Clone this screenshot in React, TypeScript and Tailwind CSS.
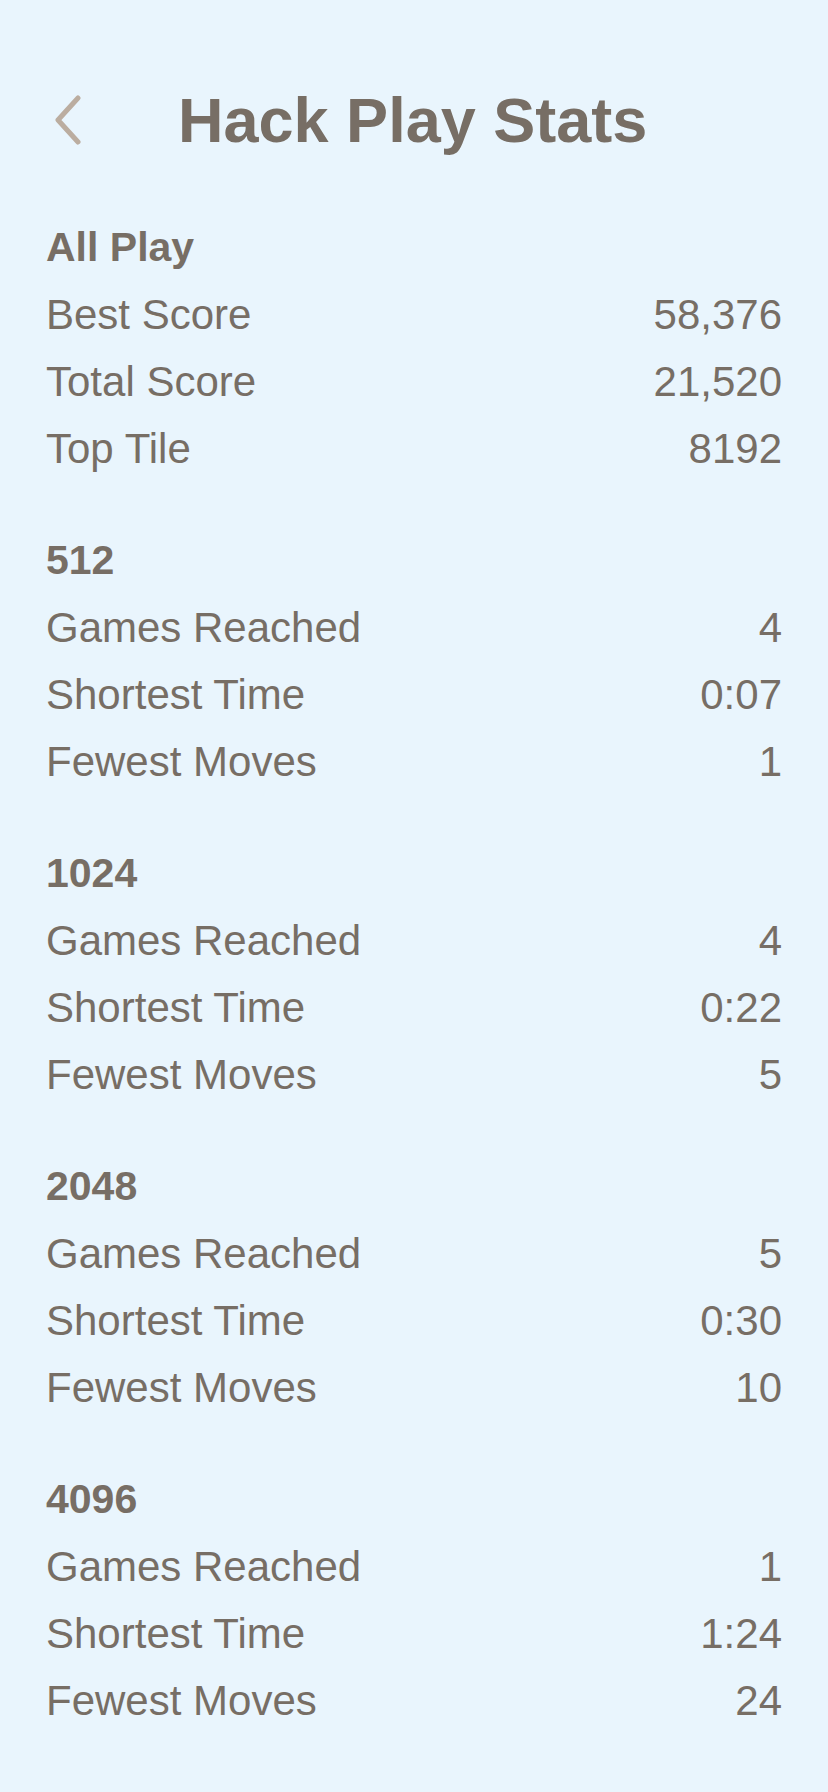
import React from 'react';

interface StatRow {
  label: string;
  value: string;
}

interface StatSection {
  title: string;
  rows: StatRow[];
}

const sections: StatSection[] = [
  {
    title: 'All Play',
    rows: [
      { label: 'Best Score', value: '58,376' },
      { label: 'Total Score', value: '21,520' },
      { label: 'Top Tile', value: '8192' },
    ],
  },
  {
    title: '512',
    rows: [
      { label: 'Games Reached', value: '4' },
      { label: 'Shortest Time', value: '0:07' },
      { label: 'Fewest Moves', value: '1' },
    ],
  },
  {
    title: '1024',
    rows: [
      { label: 'Games Reached', value: '4' },
      { label: 'Shortest Time', value: '0:22' },
      { label: 'Fewest Moves', value: '5' },
    ],
  },
  {
    title: '2048',
    rows: [
      { label: 'Games Reached', value: '5' },
      { label: 'Shortest Time', value: '0:30' },
      { label: 'Fewest Moves', value: '10' },
    ],
  },
  {
    title: '4096',
    rows: [
      { label: 'Games Reached', value: '1' },
      { label: 'Shortest Time', value: '1:24' },
      { label: 'Fewest Moves', value: '24' },
    ],
  },
];

function BackChevron() {
  return (
    <svg width="30" height="50" viewBox="0 0 30 50" fill="none">
      <path
        d="M25 3 L5 25 L25 47"
        stroke="#bbada0"
        strokeWidth="5"
        strokeLinecap="round"
        strokeLinejoin="round"
      />
    </svg>
  );
}

export default function App() {
  return (
    <div
      className="min-h-[1792px] w-[828px] bg-[#e9f5fd] pt-[80px] text-[#776e65]"
      style={{ fontFamily: '"Liberation Sans", Arial, sans-serif' }}
    >
      {/* Header */}
      <div className="flex h-[80px] items-center pl-[53px]">
        <BackChevron />
        <h1 className="ml-[95px] text-[63px] font-bold leading-[80px]">Hack Play Stats</h1>
      </div>

      {/* Stat sections */}
      <div className="flex flex-col gap-[45px] px-[46px] pt-[54px]">
        {sections.map((section) => (
          <div key={section.title}>
            <h2 className="text-[41px] font-bold leading-[67px]">{section.title}</h2>
            {section.rows.map((row) => (
              <div key={row.label} className="flex justify-between text-[42px] leading-[67px]">
                <span>{row.label}</span>
                <span>{row.value}</span>
              </div>
            ))}
          </div>
        ))}
      </div>
    </div>
  );
}
